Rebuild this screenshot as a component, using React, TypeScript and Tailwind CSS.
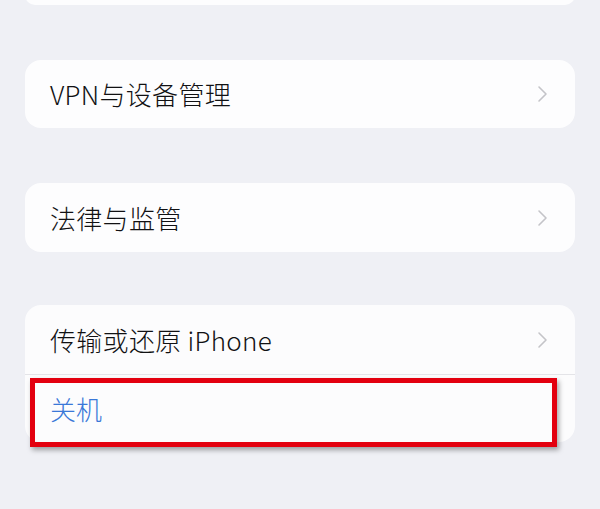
import React from "react";

const font = { fontFamily: '"Noto Sans CJK SC", "Noto Sans", sans-serif' };

function Chevron() {
  return (
    <svg width="11" height="18" viewBox="0 0 11 18" className="shrink-0">
      <path d="M2 2 L9 9 L2 16" fill="none" stroke="#c4c4c8" strokeWidth="1.6" strokeLinecap="round" strokeLinejoin="round" />
    </svg>
  );
}

function Row({ label, children, height = "h-[69px]" }: { label: string; children?: React.ReactNode; height?: string }) {
  return (
    <div className={`flex items-center justify-between pl-[25px] pr-[27px] ${height}`}>
      <span className="text-[26px] leading-none font-light text-[#111113] tracking-[0.3px]" style={font}>{label}</span>
      {children ?? <Chevron />}
    </div>
  );
}

export default function App() {
  return (
    <div className="w-[600px] h-[509px] bg-[#eff0f5] overflow-hidden flex flex-col px-[25px]">
      <div className="h-[20px] -mt-[15px] bg-[#fdfdfe] rounded-[16px] shrink-0" />
      <div className="mt-[55px] bg-[#fdfdfe] rounded-[16px] shrink-0">
        <Row label="VPN与设备管理" height="h-[68px]" />
      </div>
      <div className="mt-[55px] bg-[#fdfdfe] rounded-[16px] shrink-0">
        <Row label="法律与监管" />
      </div>
      <div className="mt-[53px] bg-[#fcfcfd] rounded-[16px] shrink-0">
        <Row label="传输或还原 iPhone" />
        <div className="h-px bg-[#e4e4e8]" />
        <div className="relative h-[67px] flex items-center pl-[25px]">
          <span className="text-[26px] leading-none font-light text-[#3a78d8]" style={font}>关机</span>
          <div className="absolute left-[5px] right-[18px] top-[3px] -bottom-[5px] border-[5px] border-[#e3000f] shadow-[2px_3px_5px_rgba(0,0,0,0.35)]" />
        </div>
      </div>
    </div>
  );
}
